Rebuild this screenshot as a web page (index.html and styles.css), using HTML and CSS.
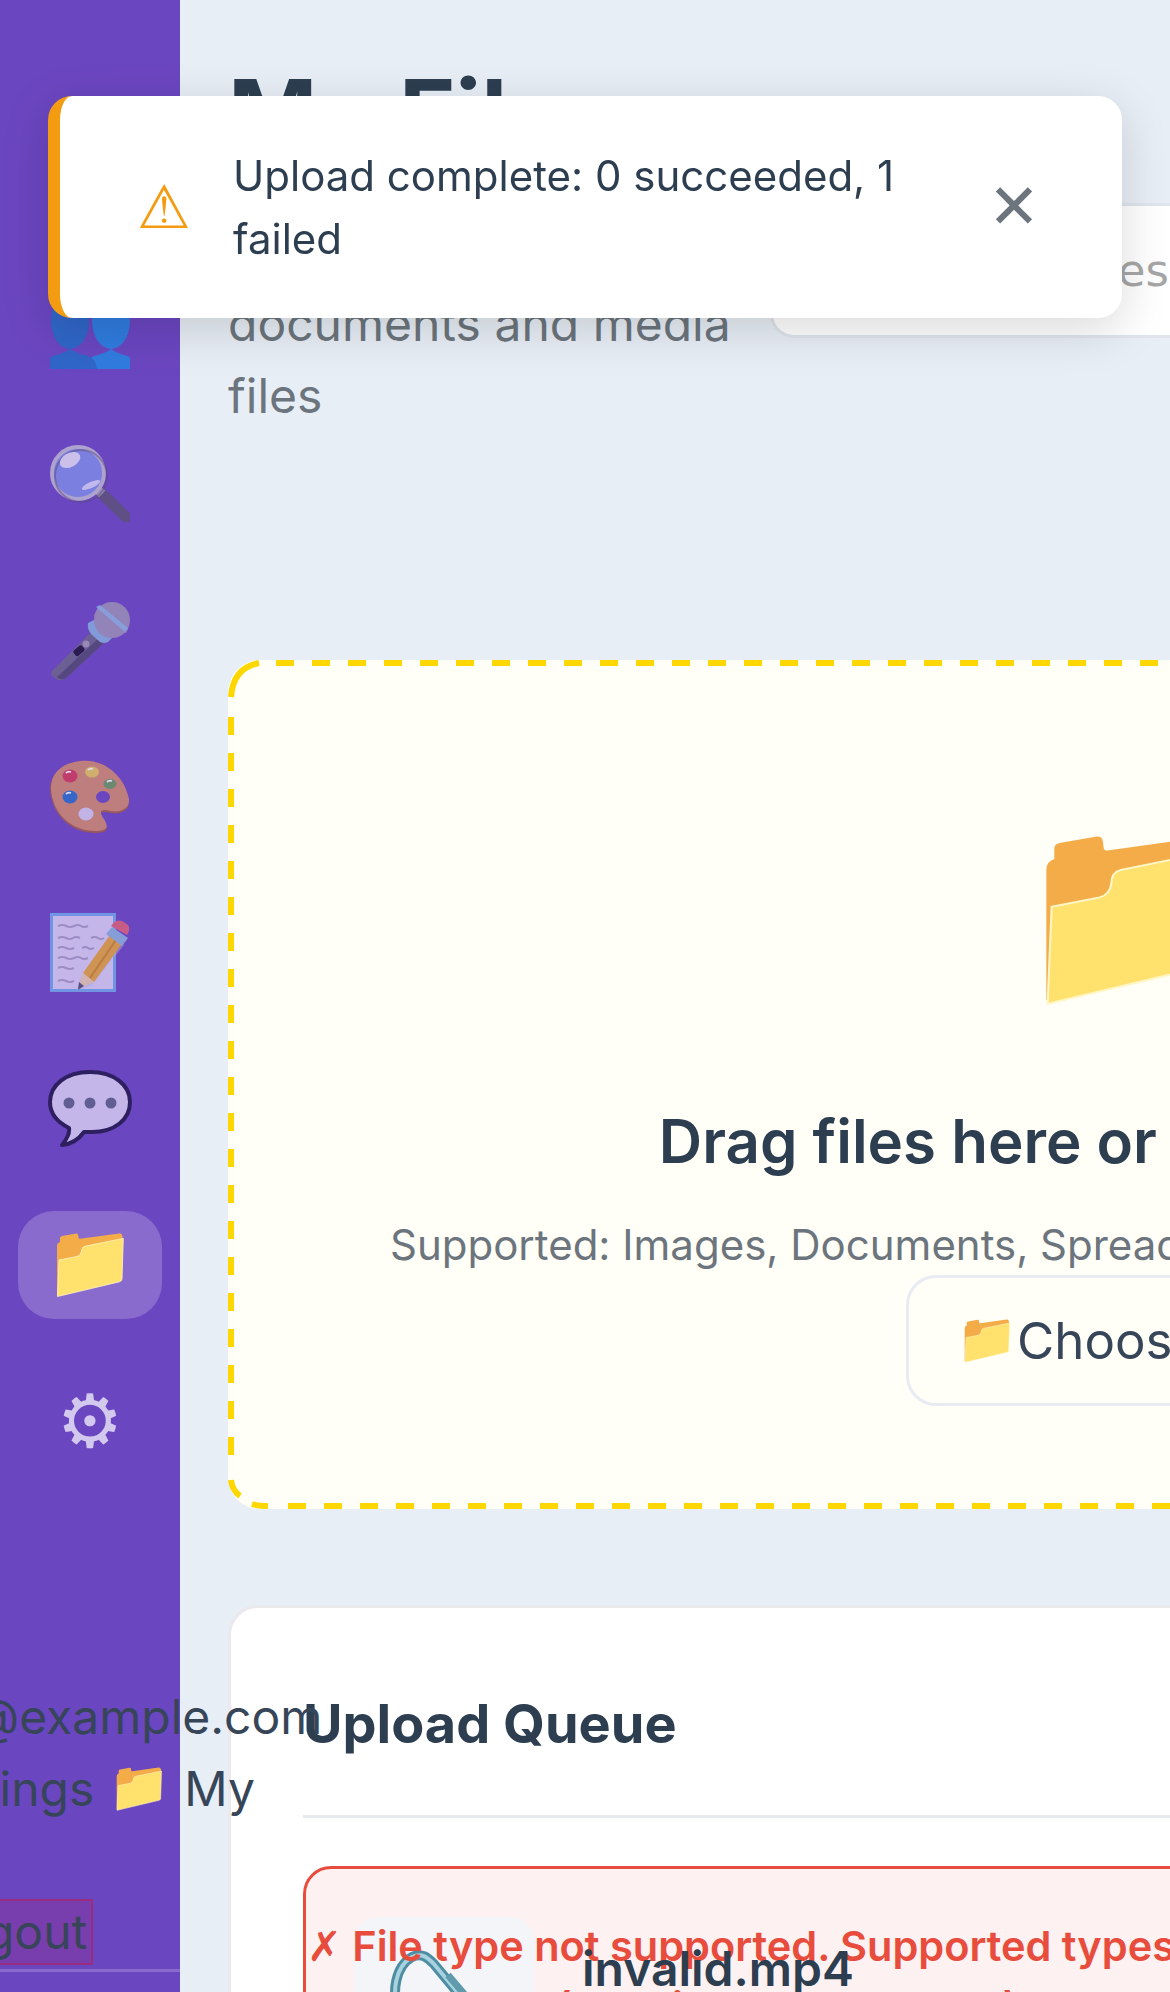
FILE: index.html
```html
<!DOCTYPE html>
<html lang="en">
<head>
    <meta charset="UTF-8">
    <meta name="viewport" content="width=device-width, initial-scale=1.0">
    <title>My Files</title>
    <link rel="stylesheet" href="styles.css">
</head>
<body>
    <svg class="sprites" width="0" height="0" aria-hidden="true">
        <symbol id="folder" viewBox="0 0 68 64">
            <path fill="#f4ac48" d="M1 13 Q1 10 4 9 L4 5 Q4 3.500 6 3 L20 .6 Q22 .4 22.300 2.500 L22.600 5 Q22.800 6 24 5.800 L63 .4 Q66 0 66.500 3 L66.500 7 L2 63 L1 62 Z"/>
            <path fill="#ffe16d" stroke="#fff6c4" stroke-width=".8" d="M3 27 L21 23.500 Q25 22.500 25.500 18 Q25.600 14 29 13.200 L67.300 5.400 L66 46 Q66 48 63.500 48.800 L1.500 63.500 Z"/>
        </symbol>
    </svg>

    <div class="layout">
        <aside class="sidebar">
            <nav class="nav">
                <a class="nav-item" href="#">
                    <svg class="nav-icon" width="70" height="66" viewBox="0 0 70 66">
                        <path fill="#f0c36a" d="M35 4 L66 32 L58 32 L58 62 L12 62 L12 32 L4 32 Z"/>
                    </svg>
                </a>
                <a class="nav-item" href="#">
                    <svg class="nav-icon" width="80" height="80" viewBox="0 0 80 80">
                        <ellipse cx="61" cy="32" rx="19" ry="28" fill="#228ae7"/>
                        <path fill="#228ae7" d="M41 80 L41 70 Q41 68 44 67 Q56 64 61 60 Q66 64 78 67 Q80 68 80 70 L80 80 Z"/>
                        <ellipse cx="20" cy="32" rx="19" ry="28" fill="#226eca"/>
                        <path fill="#226eca" d="M0 80 L0 70 Q0 68 3 67 Q15 64 20 60 Q25 64 38 67 Q46 70 47 80 Z"/>
                    </svg>
                </a>
                <a class="nav-item" href="#">
                    <svg class="nav-icon" width="80" height="80" viewBox="0 0 80 80">
                        <path d="M50 47 L76 72" stroke="#5b5375" stroke-width="11" stroke-linecap="round"/>
                        <path d="M47 44 L52 49" stroke="#a8a2b8" stroke-width="9"/>
                        <circle cx="28" cy="28" r="26" fill="#7f8fe8" stroke="#bfb9d2" stroke-width="4"/>
                        <circle cx="31" cy="31" r="26" fill="none" stroke="#57496f" stroke-width="2" opacity=".5"/>
                        <ellipse cx="20" cy="15" rx="11" ry="7" fill="#e4dff4" transform="rotate(-28 20 15)"/>
                        <ellipse cx="41" cy="40" rx="10" ry="3" fill="#d5d8f6" transform="rotate(-24 41 40)"/>
                    </svg>
                </a>
                <a class="nav-item" href="#">
                    <svg class="nav-icon" width="80" height="80" viewBox="0 0 80 80">
                        <path d="M4 68 L44 28 L56 40 L16 77 Q11 81 6 78 L1 74 Q0 71 4 68 Z" fill="#6c6688"/>
                        <path d="M7 76 L50 36 L56 40 L16 77 Q11 80 7 76 Z" fill="#50486f"/>
                        <rect x="26" y="44" width="7" height="11" rx="2" fill="#1a1238" transform="rotate(50 29 49)"/>
                        <circle cx="36" cy="43" r="3.500" fill="#a09ab5"/>
                        <path d="M38 22 L44 19 L62 37 L58 41 Q54 43 50 41 L41 33 Q37 28 38 22 Z" fill="#88afdf"/>
                        <circle cx="62" cy="19" r="18" fill="#9c93b8"/>
                        <path d="M44 15 L48 6 L78 28 L76 32 L70 31 Z" fill="#9c93b8"/>
                        <path d="M46 6 L50 4 L78 27 L75 31 Z" fill="#8fb5e2"/>
                    </svg>
                </a>
                <a class="nav-item" href="#">
                    <svg class="nav-icon" width="80" height="74" viewBox="0 0 80 74">
                        <path fill="#a55c48" d="M30 2 C52 -1 74 16 79 41 C80 51 70 55 60 53 C52 51 49 52 52 58 C58 67 60 72 48 73 C22 74 2 56 0 30 C0 14 12 4 30 2 Z"/>
                        <path fill="#d38c6d" d="M30 1 C52 -2 74 14 79 39 C80 49 70 53 60 51 C52 49 49 50 52 56 C58 65 60 70 48 71 C22 72 2 54 1 28 C1 13 12 3 30 1 Z"/>
                        <ellipse cx="53" cy="37" rx="7" ry="6" fill="#6b46c1"/>
                        <ellipse cx="20" cy="16" rx="7.500" ry="6.500" fill="#d53a58"/>
                        <ellipse cx="42" cy="12" rx="7" ry="5.500" fill="#e8c85a"/>
                        <ellipse cx="60" cy="24" rx="6.500" ry="5" fill="#6c9a5e"/>
                        <ellipse cx="20" cy="37" rx="7.500" ry="6.500" fill="#2a6fca"/>
                        <ellipse cx="36" cy="54" rx="7.500" ry="6.500" fill="#d8cff0"/>
                        <path d="M16 13 Q18 11 21 12 M38 10 Q40 8 43 9 M57 22 Q59 20 62 21 M16 34 Q18 32 21 33" stroke="#ffffff" stroke-width="1.800" fill="none"/>
                    </svg>
                </a>
                <a class="nav-item" href="#">
                    <svg class="nav-icon" width="80" height="80" viewBox="0 0 80 80">
                        <rect x="1.500" y="1.500" width="63" height="76" fill="#dcd3f4" stroke="#73a8ec" stroke-width="3"/>
                        <path d="M8 13 q4 -2 8 0 t8 0 t7 0 t7 0 M8 25 q4 -2 8 0 t7 0 t7 0 M41 25 q4 -2 7 0 t6 0 M8 35 q4 -2 8 0 t8 0 M32 35 q4 -2 6 0 t6 0 M8 45 q4 -2 8 0 t8 0 t7 0 t7 0 M8 55 q4 -2 8 0 t8 0 M8 68 q4 -2 8 0 t8 0" stroke="#a79fc4" stroke-width="2" fill="none"/>
                        <path d="M30 66 L60 22 L74 32 L42 72 L26 78 Z" fill="#b7c4f0" opacity=".5"/>
                        <path d="M33 60 L60 22 L72 31 L44 69 Z" fill="#e8a838"/>
                        <path d="M40 65 L66 27" stroke="#cd8a26" stroke-width="2"/>
                        <path d="M33 60 L44 69 L28 76 Z" fill="#eccfae"/>
                        <path d="M29 69 L34 73 L28 77 Z" fill="#575074"/>
                        <path d="M56 21 L62 14 L78 25 L72 33 Z" fill="#8fb3de"/>
                        <path d="M61 13 Q66 6 72 8 L78 12 Q81 16 77 22 Z" fill="#df6378"/>
                    </svg>
                </a>
                <a class="nav-item" href="#">
                    <svg class="nav-icon" width="84" height="78" viewBox="0 0 84 78">
                        <path fill="#dcd3f4" stroke="#20164a" stroke-width="4" stroke-linejoin="round" d="M42 2 C66 2 82 15 82 32 C82 50 66 62 44 62 L36 62 C31 69 24 74 14 75 C19 69 22 64 21 58 C9 52 2 43 2 32 C2 15 18 2 42 2 Z"/>
                        <circle cx="21" cy="33" r="5.500" fill="#5e6488"/>
                        <circle cx="42" cy="33" r="5.500" fill="#5e6488"/>
                        <circle cx="63" cy="33" r="5.500" fill="#5e6488"/>
                    </svg>
                </a>
                <a class="nav-item active" href="#">
                    <svg class="nav-icon" width="68" height="64"><use href="#folder"/></svg>
                </a>
                <a class="nav-item" href="#"><span class="gear">⚙</span></a>
            </nav>
            <hr class="sidebar-rule">
        </aside>

        <main class="main">
            <header class="page-header">
                <div class="title-block">
                    <h1>My Files</h1>
                    <p class="subtitle">Manage all your<br>documents and media<br>files</p>
                </div>
                <input class="search" type="text" placeholder="Search files...">
            </header>

            <section class="dropzone">
                <svg class="drop-frame" width="1812" height="849" viewBox="0 0 1812 849" fill="none" stroke="#ffd700" stroke-width="6">
                    <path stroke-dasharray="18 18" d="M48 3 H1812 M3 57 V810 M60 846 H1812"/>
                    <path d="M3 37 Q5 8 31 3 M3 820 Q4 830 12 836 M24 844 Q30 846 40 846"/>
                </svg>
                <svg class="drop-icon" width="182" height="170"><use href="#folder"/></svg>
                <h3>Drag files here or click to browse</h3>
                <p class="drop-hint">Supported: Images, Documents, Spreadsheets, Videos, Audio (max 100MB)</p>
                <button class="choose-btn"><svg width="46" height="44"><use href="#folder"/></svg>Choose Files</button>
            </section>

            <section class="queue">
                <h2>Upload Queue</h2>
                <div class="queue-item">
                    <div class="thumb">
                        <svg width="120" height="150" viewBox="0 0 120 150">
                            <path d="M12 66 C2 42 8 16 24 7 C34 2 40 8 46 14 L104 84" fill="none" stroke="#4f8ea2" stroke-width="10"/>
                            <path d="M12 66 C2 42 8 16 24 7 C34 2 40 8 46 14 L104 84" fill="none" stroke="#a6d3df" stroke-width="4"/>
                            <path d="M60 25 L100 72" fill="none" stroke="#5f9bad" stroke-width="7"/>
                        </svg>
                    </div>
                    <div class="file-name">invalid.mp4</div>
                    <div class="file-error">
                        <span class="error-line"><span class="cross">✗</span> File type not supported. Supported types: images, documents</span>
                        <span class="error-line second">(png, jpg, svg, rar, eps)</span>
                    </div>
                </div>
            </section>
        </main>
    </div>

    <div class="user-menu">
        <div class="user-email">user@example.com</div>
        <div class="user-links"><span>⚙ Settings</span> <svg width="46" height="44"><use href="#folder"/></svg> My</div>
        <button class="logout">Logout</button>
    </div>

    <div class="toast">
        <span class="toast-icon">⚠</span>
        <span class="toast-text">Upload complete: 0 succeeded, 1 failed</span>
        <span class="toast-close">✕</span>
    </div>
</body>
</html>
```

FILE: styles.css
```css
* {
    box-sizing: border-box;
}
body {
    margin: 0;
    height: 1992px;
    overflow: hidden;
    background-color: #e8eef6;
    color: #2c3e50;
    font-family: 'Inter', sans-serif;
    line-height: 1.6;
}
.sprites {
    position: absolute;
}
.layout {
    display: flex;
    width: 2100px;
    min-height: 1992px;
}

/* sidebar */
.sidebar {
    flex: none;
    width: 180px;
    height: 1992px;
    background-color: #6b46c1;
    padding-top: 119px;
    display: flex;
    flex-direction: column;
}
.nav {
    display: flex;
    flex-direction: column;
    gap: 48px;
    padding: 0 18px;
}
.nav-item {
    height: 108px;
    display: flex;
    align-items: center;
    justify-content: center;
    border-radius: 36px;
    text-decoration: none;
}
.nav-icon {
    opacity: 0.8;
}
.nav-item.active {
    background: rgba(255, 255, 255, 0.2);
}
.nav-item.active .nav-icon {
    opacity: 1;
}
.gear {
    font-family: 'DejaVu Sans', sans-serif;
    font-size: 74px;
    line-height: 1;
    color: rgba(255, 255, 255, 0.7);
}
.sidebar-rule {
    width: 100%;
    height: 3px;
    margin: auto 0 20px;
    border: 0;
    background: rgba(255, 255, 255, 0.2);
}

/* user block spills out of the narrow sidebar */
.user-menu {
    position: absolute;
    top: 1681px;
    left: 0;
    font-size: 48px;
    line-height: 72px;
    color: #374558;
    white-space: nowrap;
}
.user-email {
    margin-left: -127px;
}
.user-links {
    margin-left: -146px;
    display: flex;
    align-items: center;
    gap: 22px;
}
.logout {
    display: block;
    margin: 74px 0 0 -77px;
    height: 66px;
    padding: 0 4px;
    font: inherit;
    line-height: 60px;
    color: inherit;
    background: rgba(200, 20, 60, 0.15);
    border: 2px solid rgba(200, 20, 60, 0.4);
}

/* main */
.main {
    flex: none;
    width: 1900px;
    padding: 57px 0 0 48px;
}
.page-header {
    display: flex;
    align-items: flex-start;
    gap: 35px;
    height: 603px;
}
.title-block {
    flex: none;
    width: 507px;
}
h1 {
    margin: 0 0 44px;
    font-size: 96px;
    font-weight: 700;
    line-height: 1.2;
    white-space: nowrap;
}
.subtitle {
    margin: 0;
    font-size: 48px;
    line-height: 72px;
    color: #6c757d;
    white-space: nowrap;
}
.search {
    flex: none;
    width: 1200px;
    height: 135px;
    margin-top: 146px;
    padding: 0 0 0 135px;
    font-family: 'DejaVu Sans', sans-serif;
    font-size: 45px;
    background: #ffffff;
    border: 3px solid #e0e4ec;
    border-radius: 24px;
}
.search::placeholder {
    color: #a6a6a6;
}

.dropzone {
    position: relative;
    width: 1812px;
    height: 849px;
    padding-top: 175px;
    display: flex;
    flex-direction: column;
    align-items: center;
    text-align: center;
    background: #fffff7;
    border-radius: 32px;
}
.drop-frame {
    position: absolute;
    top: 0;
    left: 0;
}
.drop-icon {
    flex: none;
}
.dropzone h3 {
    margin: 91px 0 0;
    font-size: 60px;
    font-weight: 600;
    line-height: 90px;
    white-space: nowrap;
}
.drop-hint {
    margin: 29px 0 0;
    padding-left: 8px;
    font-size: 42px;
    line-height: 60px;
    color: #6c757d;
    white-space: nowrap;
}
.choose-btn {
    display: inline-flex;
    align-items: center;
    gap: 7px;
    padding: 24px 31px 24px 55px;
    font-family: inherit;
    font-size: 51px;
    line-height: 77px;
    color: #374558;
    background: transparent;
    border: 3px solid #e8ebf2;
    border-radius: 30px;
}

.queue {
    width: 1812px;
    margin-top: 96px;
    padding: 75px 72px 60px;
    background: #ffffff;
    border: 3px solid #e9e9ee;
    border-radius: 30px;
}
.queue h2 {
    margin: 0;
    padding-bottom: 50px;
    font-size: 54px;
    font-weight: 700;
    line-height: 82px;
    border-bottom: 3px solid #e8e9ec;
}
.queue-item {
    position: relative;
    display: flex;
    gap: 48px;
    margin-top: 48px;
    padding: 48px;
    height: 400px;
    background: #fef1f1;
    border: 3px solid #e74c3c;
    border-radius: 28px;
}
.thumb {
    flex: none;
    width: 180px;
    height: 180px;
    padding: 33px 0 0 34px;
    background: #f3f5f8;
    border-radius: 24px;
}
.file-name {
    margin-top: 20px;
    font-size: 48px;
    font-weight: 600;
    line-height: 64px;
    position: relative;
    z-index: 1;
}
.file-error {
    position: absolute;
    top: 47px;
    left: 1px;
    width: 1500px;
    font-size: 41.5px;
    font-weight: 600;
    line-height: 60px;
    color: #e74c3c;
    white-space: nowrap;
}
.error-line {
    display: block;
}
.error-line.second {
    padding-left: 249px;
}
.cross {
    font-family: 'DejaVu Sans', sans-serif;
}

/* toast */
.toast {
    position: fixed;
    top: 96px;
    left: 48px;
    right: 48px;
    height: 222px;
    display: flex;
    align-items: center;
    padding: 0 82px 0 77px;
    background: #ffffff;
    border-left: 12px solid #f39c12;
    border-radius: 24px;
    box-shadow: 0 12px 48px rgba(0, 0, 0, 0.15);
}
.toast-icon {
    flex: none;
    width: 48px;
    margin-right: 48px;
    font-family: 'DejaVu Sans', sans-serif;
    font-size: 60px;
    line-height: 1;
    color: #f39c12;
}
.toast-text {
    flex: 1;
    font-size: 42px;
    line-height: 63px;
}
.toast-close {
    flex: none;
    font-family: 'DejaVu Sans', sans-serif;
    font-size: 62px;
    line-height: 1;
    color: #6c757d;
}
```
